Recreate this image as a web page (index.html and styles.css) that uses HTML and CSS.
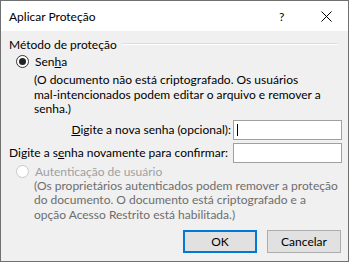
FILE: index.html
```html
<!DOCTYPE html>
<html lang="pt">
<head>
  <meta charset="UTF-8" />
  <title>Aplicar Proteção</title>
  <link rel="stylesheet" href="styles.css">
</head>
<body>
  <div class="dialog">
    <div class="titlebar">
      <span class="title">Aplicar Proteção</span>
      <span class="help">?</span>
      <span class="close">
        <svg width="11" height="11" viewBox="0 0 11 11"><path d="M0.5 0.5 L10.5 10.5 M10.5 0.5 L0.5 10.5" stroke="#000" stroke-width="1" fill="none"/></svg>
      </span>
    </div>
    <div class="content">
      <div class="group-head">
        <span>Método de proteção</span>
        <span class="group-line"></span>
      </div>

      <div class="radio-row">
        <span class="radio checked"></span>
        <span>Sen<u>h</u>a</span>
      </div>
      <div class="desc">
        (O documento não está criptografado. Os usuários<br>
        mal-intencionados podem editar o arquivo e remover a<br>
        senha.)
      </div>

      <div class="field-row first">
        <label for="pw1"><u>D</u>igite a nova senha (opcional):</label>
        <div class="input" id="pw1"><span class="caret"></span></div>
      </div>
      <div class="field-row second">
        <label for="pw2">Digite a s<u>e</u>nha novamente para confirmar:</label>
        <div class="input" id="pw2"></div>
      </div>

      <div class="radio-row disabled">
        <span class="radio"></span>
        <span>Autenticação de usuário</span>
      </div>
      <div class="desc muted">
        (Os proprietários autenticados podem remover a proteção<br>
        do documento. O documento está criptografado e a<br>
        opção Acesso Restrito está habilitada.)
      </div>

      <div class="buttons">
        <button class="btn default">OK</button>
        <button class="btn">Cancelar</button>
      </div>
    </div>
  </div>
</body>
</html>
```

FILE: styles.css
```css
:root {
  --face: #f0f0f0;
  --border: #707070;
  --blue: #0078d7;
  --font-ui: Lato, "Noto Sans", sans-serif;
}

html, body {
  margin: 0;
  padding: 0;
  background: var(--face);
}

.dialog {
  width: 349px;
  height: 262px;
  box-sizing: border-box;
  border: 1px solid var(--border);
  background: var(--face);
  font-family: var(--font-ui);
  font-size: 12px;
  color: #000;
  white-space: nowrap;
  overflow: hidden;
}

.titlebar {
  height: 30px;
  background: #fff;
  display: flex;
  align-items: center;
  padding-left: 8px;
}

.title {
  flex: 1;
}

.help {
  width: 12px;
  margin-right: 30px;
}

.close {
  display: flex;
  margin-right: 16px;
}

.content {
  padding: 0 6px 0 8px;
}

.group-head {
  display: flex;
  align-items: center;
  height: 16px;
  margin-top: 5px;
}

.group-line {
  flex: 1;
  margin: 0 4px 0 5px;
  border-top: 1px solid #dcdcdc;
  border-bottom: 1px solid #fff;
}

.radio-row {
  display: flex;
  align-items: center;
  height: 16px;
  margin-top: 1px;
  padding-left: 7px;
}

.radio {
  width: 11px;
  height: 11px;
  border: 1px solid #333;
  border-radius: 50%;
  background: #fff;
  margin-right: 6px;
  position: relative;
}

.radio.checked::after {
  content: "";
  position: absolute;
  left: 2px;
  top: 2px;
  width: 7px;
  height: 7px;
  border-radius: 50%;
  background: #222;
}

.radio-row.disabled {
  color: #a0a0a0;
  height: 14px;
  margin-top: 2px;
}

.radio-row.disabled .radio {
  border-color: #c8c8c8;
}

.desc {
  padding-left: 25px;
  line-height: 14.5px;
  margin-top: 4px;
}

.desc.muted {
  color: #6d6d6d;
  margin-top: 0;
}

.field-row {
  display: flex;
  align-items: center;
  justify-content: flex-end;
}

.field-row.first {
  margin-top: 3px;
}

.field-row.second {
  justify-content: space-between;
  margin-top: 3px;
}

.field-row label {
  margin-right: 2px;
}

.input {
  width: 107px;
  height: 18px;
  border: 1px solid #a0a0a0;
  background: #fff;
  position: relative;
}

.caret {
  position: absolute;
  left: 3px;
  top: 3px;
  width: 1px;
  height: 12px;
  background: #000;
}

.buttons {
  display: flex;
  justify-content: flex-end;
  gap: 10px;
  margin-top: 8px;
  padding-right: 1px;
}

.btn {
  width: 74px;
  height: 23px;
  box-sizing: border-box;
  border: 1px solid #adadad;
  background: #e1e1e1;
  font-family: var(--font-ui);
  font-size: 12px;
  color: #000;
  padding: 0;
}

.btn.default {
  border: 2px solid var(--blue);
}
```
